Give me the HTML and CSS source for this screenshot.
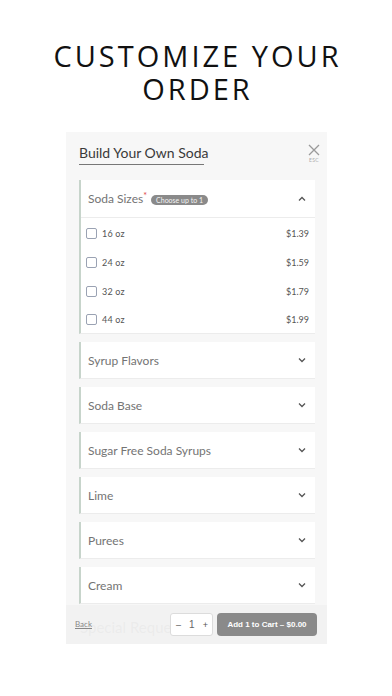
FILE: index.html
```html
<!DOCTYPE html>
<html>
<head>
<meta charset="utf-8">
<link rel="stylesheet" href="styles.css">
</head>
<body>
<h1 class="heading"><span class="line">CUSTOMIZE YOUR</span><span class="line">ORDER</span></h1>
<div class="panel">
  <div class="panel-head">
    <div class="title">Build Your Own Soda</div>
    <div class="close">
      <svg width="12" height="12" viewBox="0 0 12 12"><path d="M1 1L11 11M11 1L1 11" stroke="#9a9a9a" stroke-width="1.3" fill="none"/></svg>
      <span class="esc">ESC</span>
    </div>
  </div>
  <div class="groups">
    <div class="card open">
      <div class="card-head">
        <span class="card-title">Soda Sizes<span class="req">*</span></span>
        <span class="badge">Choose up to 1</span>
        <svg class="chev" width="8" height="6" viewBox="0 0 8 6"><path d="M1 4.5L4 1.5L7 4.5" stroke="#555" stroke-width="1.3" fill="none"/></svg>
      </div>
      <div class="options">
        <div class="opt"><span class="box"></span><span class="opt-name">16 oz</span><span class="price">$1.39</span></div>
        <div class="opt"><span class="box"></span><span class="opt-name">24 oz</span><span class="price">$1.59</span></div>
        <div class="opt"><span class="box"></span><span class="opt-name">32 oz</span><span class="price">$1.79</span></div>
        <div class="opt"><span class="box"></span><span class="opt-name">44 oz</span><span class="price">$1.99</span></div>
      </div>
    </div>
    <div class="card"><div class="card-head"><span class="card-title">Syrup Flavors</span><svg class="chev" width="8" height="6" viewBox="0 0 8 6"><path d="M1 1.5L4 4.5L7 1.5" stroke="#555" stroke-width="1.3" fill="none"/></svg></div></div>
    <div class="card"><div class="card-head"><span class="card-title">Soda Base</span><svg class="chev" width="8" height="6" viewBox="0 0 8 6"><path d="M1 1.5L4 4.5L7 1.5" stroke="#555" stroke-width="1.3" fill="none"/></svg></div></div>
    <div class="card"><div class="card-head"><span class="card-title">Sugar Free Soda Syrups</span><svg class="chev" width="8" height="6" viewBox="0 0 8 6"><path d="M1 1.5L4 4.5L7 1.5" stroke="#555" stroke-width="1.3" fill="none"/></svg></div></div>
    <div class="card"><div class="card-head"><span class="card-title">Lime</span><svg class="chev" width="8" height="6" viewBox="0 0 8 6"><path d="M1 1.5L4 4.5L7 1.5" stroke="#555" stroke-width="1.3" fill="none"/></svg></div></div>
    <div class="card"><div class="card-head"><span class="card-title">Purees</span><svg class="chev" width="8" height="6" viewBox="0 0 8 6"><path d="M1 1.5L4 4.5L7 1.5" stroke="#555" stroke-width="1.3" fill="none"/></svg></div></div>
    <div class="card"><div class="card-head"><span class="card-title">Cream</span><svg class="chev" width="8" height="6" viewBox="0 0 8 6"><path d="M1 1.5L4 4.5L7 1.5" stroke="#555" stroke-width="1.3" fill="none"/></svg></div></div>
    <div class="special">Special Requests</div>
  </div>
  <div class="footer">
    <a class="back">Back</a>
    <div class="qty"><span class="minus">–</span><span class="num">1</span><span class="plus">+</span></div>
    <div class="add">Add 1 to Cart – $0.00</div>
  </div>
</div>
</body>
</html>
```
FILE: styles.css
```css
* { box-sizing: border-box; }
html, body { margin: 0; padding: 0; background: #fff; }
body { font-family: Lato, "Noto Sans", sans-serif; width: 392px; height: 696px; overflow: hidden; }

.heading {
  margin: 0;
  padding-top: 39px;
  font-family: "Open Sans", Lato, sans-serif;
  font-weight: 400;
  font-size: 29px;
  letter-spacing: 3px;
  text-align: center;
  color: #111;
  height: 132px;
  display: flex;
  flex-direction: column;
  align-items: center;
}
.line { display: block; line-height: 33px; height: 33px; padding-left: 3px; }

.panel {
  position: relative;
  margin-left: 66px;
  width: 261px;
  height: 512px;
  background: #f7f7f7;
  overflow: hidden;
}

.panel-head {
  display: flex;
  justify-content: space-between;
  align-items: flex-start;
  padding: 10px 13px 0 13px;
  height: 48px;
}
.title {
  font-size: 14px;
  color: #3a3a3a;
  line-height: 19px;
  padding-top: 1px;
  border-bottom: 1.5px solid #777;
  width: 125px;
  height: 22.5px;
  white-space: nowrap;
}
.close {
  display: flex;
  flex-direction: column;
  align-items: center;
  padding-top: 2px;
  margin-right: -6px;
}
.esc { font-size: 5px; color: #aaa; letter-spacing: 0.3px; margin-top: 1px; }

.groups {
  padding: 0 12px 0 13px;
  display: flex;
  flex-direction: column;
  gap: 8px;
}
.card {
  background: #fff;
  border-left: 2px solid #c7d4cb;
  border-bottom: 1px solid #ececec;
}
.card-head {
  height: 36px;
  display: flex;
  align-items: center;
  padding: 0 8px 0 7px;
}
.card.open .card-head { height: 38px; border-bottom: 1.5px solid #ececec; }
.card-title { font-size: 12px; color: #747474; }
.req { color: #e0454a; font-size: 9px; vertical-align: top; position: relative; top: -1px; }
.badge {
  margin-left: 4px;
  background: #8a8a8a;
  color: #f4f4f4;
  font-size: 7px;
  line-height: 10px;
  padding: 0 5px;
  border-radius: 6px;
  position: relative;
  top: 1px;
}
.chev { margin-left: auto; margin-right: 1px; }

.options { padding: 1px 0 0 0; }
.opt {
  height: 29px;
  display: flex;
  align-items: center;
  padding: 0 6px 0 5px;
}
.opt:last-child { height: 27px; }
.box {
  width: 11px;
  height: 11px;
  border: 1.3px solid #9aa2b3;
  border-radius: 2px;
  margin-right: 5px;
}
.opt-name { font-size: 9px; color: #555; letter-spacing: 0.2px; }
.price { margin-left: auto; font-size: 9px; color: #555; }

.special {
  margin-top: 6px;
  font-size: 15px;
  color: #bbb;
  padding-left: 1px;
}

.footer {
  position: absolute;
  left: 0;
  right: 0;
  bottom: 0;
  height: 39px;
  background: rgba(241, 241, 241, 0.88);
  display: flex;
  align-items: center;
  padding: 0 10px 0 9px;
}
.back {
  font-size: 8px;
  color: #888;
  text-decoration: underline;
  margin-bottom: 2px;
}
.qty {
  margin-left: auto;
  width: 43px;
  height: 23px;
  background: #fff;
  border: 1px solid #dcdcdc;
  border-radius: 3px;
  display: flex;
  align-items: center;
  justify-content: space-between;
  padding: 0 4px 0 5px;
  font-size: 9px;
  color: #555;
  font-family: "Liberation Sans", Arial, sans-serif;
}
.num { font-size: 10px; color: #666; }
.add {
  margin-left: 4px;
  width: 100px;
  height: 23px;
  background: #8a8a8a;
  border-radius: 4px;
  color: #fff;
  font-family: "Liberation Sans", Arial, sans-serif;
  font-weight: bold;
  font-size: 8px;
  display: flex;
  align-items: center;
  justify-content: center;
}
```
